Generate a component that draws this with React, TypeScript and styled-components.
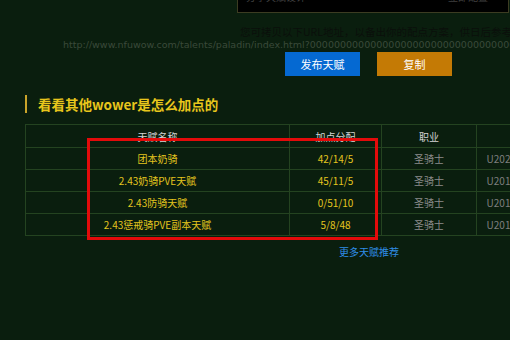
import React from "react";
import styled, { createGlobalStyle } from "styled-components";

const Global = createGlobalStyle`
  html, body { margin: 0; padding: 0; }
  body {
    background: #0a1e0e;
    width: 510px;
    height: 340px;
    overflow: hidden;
    font-family: "Noto Sans CJK SC", "Noto Sans", sans-serif;
  }
`;

const Page = styled.div`
  position: relative;
  width: 510px;
  height: 340px;
  overflow: hidden;
  display: flex;
  flex-direction: column;
`;

const TopBox = styled.div`
  margin-left: 237px;
  width: 242px;
  height: 12px;
  background: #000;
  border: 1px solid #3c3c22;
  border-top: none;
  overflow: hidden;
  display: flex;
  justify-content: space-between;
  padding: 0 20px 0 8px;
  box-sizing: content-box;
`;

const TopText = styled.span`
  font-size: 10px;
  line-height: 10px;
  margin-top: -8px;
  color: #3f3f3f;
  white-space: nowrap;
`;

const Notice = styled.div`
  margin-top: 12px;
  padding-left: 240px;
  font-size: 10.5px;
  line-height: 14px;
  color: #0b0f0b;
  white-space: nowrap;
`;

const Url = styled.div`
  padding-left: 63px;
  font-family: "DejaVu Sans", sans-serif;
  font-size: 9.5px;
  line-height: 12px;
  color: #3a4a3a;
  white-space: nowrap;
`;

const ButtonRow = styled.div`
  margin-top: 1px;
  padding-left: 285px;
  display: flex;
  gap: 17px;
`;

const Button = styled.div<{ $bg: string }>`
  width: 75px;
  height: 24px;
  background: ${(p) => p.$bg};
  color: #fff;
  font-size: 11px;
  display: flex;
  align-items: center;
  justify-content: center;
`;

const Heading = styled.div`
  margin-top: 19px;
  margin-left: 25px;
  height: 18px;
  border-left: 2px solid #c9a42a;
  padding-left: 11px;
  font-size: 13.5px;
  font-weight: bold;
  line-height: 18px;
  color: #e8c61c;
  white-space: nowrap;
`;

const Table = styled.table`
  margin-top: 11px;
  margin-left: 25px;
  border-collapse: collapse;
  table-layout: fixed;
  width: 553px;
  font-size: 10px;
`;

const Th = styled.th<{ $w: number }>`
  width: ${(p) => p.$w}px;
  height: 22px;
  padding: 0;
  border: 1px solid #244320;
  color: #d4d4d4;
  font-weight: normal;
  text-align: center;
`;

const Td = styled.td<{ $c: string }>`
  height: 21px;
  padding: 0;
  border: 1px solid #244320;
  color: ${(p) => p.$c};
  text-align: center;
  white-space: nowrap;
  overflow: hidden;
`;

const MoreLink = styled.a`
  margin-top: 9px;
  margin-left: 339px;
  font-size: 10px;
  line-height: 14px;
  color: #2f8de6;
  text-decoration: none;
  align-self: flex-start;
`;

const Highlight = styled.div`
  position: absolute;
  left: 87px;
  top: 138px;
  width: 291px;
  height: 102px;
  box-sizing: border-box;
  border: 3px solid #e30b0b;
  pointer-events: none;
`;

const rows = [
  { name: "团本奶骑", dist: "42/14/5", date: "U2022-03-11 20:15" },
  { name: "2.43奶骑PVE天赋", dist: "45/11/5", date: "U2018-07-20 10:32" },
  { name: "2.43防骑天赋", dist: "0/51/10", date: "U2018-07-20 10:29" },
  { name: "2.43惩戒骑PVE副本天赋", dist: "5/8/48", date: "U2018-07-20 10:25" },
];

export default function App() {
  return (
    <Page>
      <Global />
      <TopBox>
        <TopText>分享天赋设计</TopText>
        <TopText>立即配置</TopText>
      </TopBox>
      <Notice>您可拷贝以下URL地址，以备出你的配点方案，供日后参考</Notice>
      <Url>
        http://www.nfuwow.com/talents/paladin/index.html?00000000000000000000000000000000000000000000
      </Url>
      <ButtonRow>
        <Button $bg="#0569d2">发布天赋</Button>
        <Button $bg="#c47a05">复制</Button>
      </ButtonRow>
      <Heading>看看其他wower是怎么加点的</Heading>
      <Table>
        <thead>
          <tr>
            <Th $w={263}>天赋名称</Th>
            <Th $w={91}>加点分配</Th>
            <Th $w={94}>职业</Th>
            <Th $w={105}></Th>
          </tr>
        </thead>
        <tbody>
          {rows.map((r) => (
            <tr key={r.name}>
              <Td $c="#e4c51e">{r.name}</Td>
              <Td $c="#e4c51e">{r.dist}</Td>
              <Td $c="#8c8c8c">圣骑士</Td>
              <Td $c="#7e7e7e">{r.date}</Td>
            </tr>
          ))}
        </tbody>
      </Table>
      <MoreLink href="#">更多天赋推荐</MoreLink>
      <Highlight />
    </Page>
  );
}
